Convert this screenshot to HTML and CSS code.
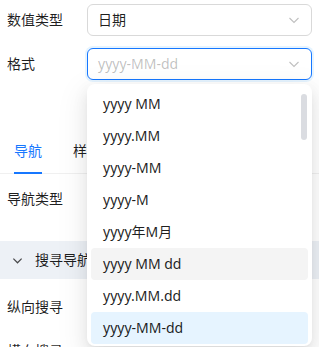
FILE: index.html
```html
<!DOCTYPE html>
<html lang="zh-CN">
<head>
    <meta charset="UTF-8">
    <meta name="viewport" content="width=device-width, initial-scale=1.0">
    <title>格式设置</title>
    <link rel="stylesheet" href="styles.css">
</head>
<body>

    <div class="panel">
        <div class="form-row">
            <label class="form-label">数值类型</label>
            <div class="select">
                <span class="select-value">日期</span>
                <svg class="select-arrow" viewBox="0 0 12 12" width="12" height="12"><path d="M1.5 4 L6 8.5 L10.5 4" fill="none" stroke="currentColor" stroke-width="1.1"/></svg>
            </div>
        </div>

        <div class="form-row">
            <label class="form-label">格式</label>
            <div class="select select-focused">
                <span class="select-placeholder">yyyy-MM-dd</span>
                <svg class="select-arrow" viewBox="0 0 12 12" width="12" height="12"><path d="M1.5 4 L6 8.5 L10.5 4" fill="none" stroke="currentColor" stroke-width="1.1"/></svg>
            </div>
        </div>

        <div class="tabs">
            <div class="tab tab-active">导航</div>
            <div class="tab">样式</div>
        </div>

        <div class="form-row">
            <label class="form-label">导航类型</label>
        </div>

        <div class="collapse-header">
            <svg class="collapse-arrow" viewBox="0 0 12 12" width="11" height="11"><path d="M1.5 4 L6 8.5 L10.5 4" fill="none" stroke="currentColor" stroke-width="1.3"/></svg>
            <span>搜寻导航</span>
        </div>

        <div class="form-row">
            <label class="form-label">纵向搜寻</label>
        </div>
        <div class="form-row">
            <label class="form-label">横向搜寻</label>
        </div>

        <!-- 下拉选项 -->
        <div class="dropdown">
            <div class="option">yyyy MM</div>
            <div class="option">yyyy.MM</div>
            <div class="option">yyyy-MM</div>
            <div class="option">yyyy-M</div>
            <div class="option">yyyy年M月</div>
            <div class="option option-hover">yyyy MM dd</div>
            <div class="option">yyyy.MM.dd</div>
            <div class="option option-selected">yyyy-MM-dd</div>
            <div class="scrollbar"></div>
        </div>
    </div>

</body>
</html>
```

FILE: styles.css
```css
body {
    margin: 0;
    font-family: 'Noto Sans', 'Noto Sans CJK SC', sans-serif;
    font-size: 14px;
    line-height: 22px;
    color: rgba(0, 0, 0, 0.88);
    background: #fff;
    overflow: hidden;
}
.panel {
    position: relative;
    padding-top: 4px;
}
.form-row {
    display: flex;
    align-items: center;
    height: 32px;
    padding-left: 7px;
    margin-bottom: 12px;
}
.form-label {
    width: 80px;
}
.select {
    display: flex;
    align-items: center;
    box-sizing: border-box;
    width: 225px;
    height: 32px;
    padding: 0 11px 0 10px;
    border: 1px solid #d9d9d9;
    border-radius: 6px;
    background: #fff;
}
.select-focused {
    border-color: #1677ff;
    box-shadow: 0 0 0 2px rgba(5, 145, 255, 0.1);
}
.select-value {
    flex: 1;
}
.select-placeholder {
    flex: 1;
    color: rgba(0, 0, 0, 0.25);
}
.select-arrow {
    color: rgba(0, 0, 0, 0.25);
}
.tabs {
    display: flex;
    gap: 31px;
    margin-top: 48px;
    padding-left: 14px;
    border-bottom: 1px solid #f0f0f0;
    margin-bottom: 9px;
}
.tab {
    padding: 12px 0 10px;
    border-bottom: 2px solid transparent;
    margin-bottom: -1px;
}
.tab-active {
    color: #1677ff;
    border-bottom-color: #1677ff;
}
.collapse-header {
    display: flex;
    align-items: center;
    height: 38px;
    margin-top: 26px;
    margin-bottom: 12px;
    padding-left: 12px;
    background: #edf1f6;
}
.collapse-arrow {
    margin-right: 12px;
    color: rgba(0, 0, 0, 0.7);
}
.dropdown {
    position: absolute;
    left: 87px;
    top: 84px;
    width: 225px;
    height: 262px;
    box-sizing: border-box;
    padding: 4px;
    background: #fff;
    border-radius: 8px;
    overflow: hidden;
    box-shadow: 0 6px 16px 0 rgba(0, 0, 0, 0.08), 0 3px 6px -4px rgba(0, 0, 0, 0.12), 0 9px 28px 8px rgba(0, 0, 0, 0.05);
}
.option {
    height: 32px;
    padding: 5px 12px;
    box-sizing: border-box;
    border-radius: 4px;
}
.option-hover {
    background: #f4f4f4;
}
.option-selected {
    background: #e6f4ff;
}
.scrollbar {
    position: absolute;
    right: 5px;
    top: 10px;
    width: 6px;
    height: 46px;
    border-radius: 3px;
    background: #dadce1;
}
```
